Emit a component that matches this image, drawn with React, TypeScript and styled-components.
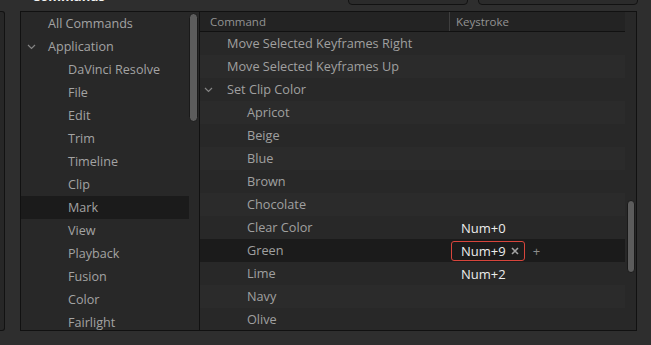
import React from 'react'
import styled, { createGlobalStyle } from 'styled-components'

const GlobalStyle = createGlobalStyle`
  body {
    margin: 0;
    background: #2e2e2e;
    font-family: "Open Sans", "Noto Sans", sans-serif;
  }
`

const tree = [
  { label: 'All Commands', depth: 0 },
  { label: 'Application', depth: 0, open: true },
  { label: 'DaVinci Resolve', depth: 1 },
  { label: 'File', depth: 1 },
  { label: 'Edit', depth: 1 },
  { label: 'Trim', depth: 1 },
  { label: 'Timeline', depth: 1 },
  { label: 'Clip', depth: 1 },
  { label: 'Mark', depth: 1, selected: true },
  { label: 'View', depth: 1 },
  { label: 'Playback', depth: 1 },
  { label: 'Fusion', depth: 1 },
  { label: 'Color', depth: 1 },
  { label: 'Fairlight', depth: 1 },
]

type Cmd = { label: string; depth: number; open?: boolean; key?: string; editing?: boolean }

const commands: Cmd[] = [
  { label: 'Move Selected Keyframes Right', depth: 0 },
  { label: 'Move Selected Keyframes Up', depth: 0 },
  { label: 'Set Clip Color', depth: 0, open: true },
  { label: 'Apricot', depth: 1 },
  { label: 'Beige', depth: 1 },
  { label: 'Blue', depth: 1 },
  { label: 'Brown', depth: 1 },
  { label: 'Chocolate', depth: 1 },
  { label: 'Clear Color', depth: 1, key: 'Num+0' },
  { label: 'Green', depth: 1, key: 'Num+9', editing: true },
  { label: 'Lime', depth: 1, key: 'Num+2' },
  { label: 'Navy', depth: 1 },
  { label: 'Olive', depth: 1 },
]

const Chevron = ({ left }: { left: number }) => (
  <ChevronWrap style={{ left }}>
    <svg width="9" height="6" viewBox="0 0 9 6">
      <path d="M1 1 L4.5 4.5 L8 1" fill="none" stroke="#858585" strokeWidth="1.2" />
    </svg>
  </ChevronWrap>
)

const App = () => {
  return (
    <Page>
      <GlobalStyle />
      <TopBar>
        <Title>Commands</Title>
        <TopButton $w={120} />
        <TopButton $w={160} />
      </TopBar>
      <Body>
        <Stub />
        <Panel>
          <TreePane>
            <TreeList>
              {tree.map((t) => (
                <TreeRow key={t.label} $depth={t.depth} $selected={!!t.selected}>
                  {t.open && <Chevron left={6} />}
                  {t.label}
                </TreeRow>
              ))}
            </TreeList>
            <Track $w={10}>
              <Thumb $top={1} $h={109} $w={9} $left={0} />
            </Track>
          </TreePane>
          <TablePane>
            <Table>
              <HeaderRow>
                <HeadCell $w={250}>Command</HeadCell>
                <HeadCell $last>Keystroke</HeadCell>
              </HeaderRow>
              {commands.map((c, i) => (
                <CmdRow key={c.label} $alt={i % 2 === 1} $selected={!!c.editing}>
                  <CmdCell $depth={c.depth}>
                    {c.open && <Chevron left={4} />}
                    {c.label}
                  </CmdCell>
                  <KeyCell>
                    {c.editing ? (
                      <>
                        <Chip>
                          {c.key}
                          <ChipClose>
                            <svg width="8" height="8" viewBox="0 0 8 8">
                              <path d="M1 1 L7 7 M7 1 L1 7" stroke="#a3a3a3" strokeWidth="1.6" />
                            </svg>
                          </ChipClose>
                        </Chip>
                        <Plus>+</Plus>
                      </>
                    ) : (
                      c.key && <KeyText>{c.key}</KeyText>
                    )}
                  </KeyCell>
                </CmdRow>
              ))}
            </Table>
            <Track $w={11}>
              <Thumb $top={188} $h={73} $w={8} $left={2} />
            </Track>
          </TablePane>
        </Panel>
      </Body>
    </Page>
  )
}

export default App

const Page = styled.div`
  width: 651px;
  height: 345px;
  overflow: hidden;
  display: flex;
  flex-direction: column;
`

const TopBar = styled.div`
  height: 11px;
  display: flex;
  align-items: flex-end;
  overflow: hidden;
`

const Title = styled.div`
  margin-left: 32px;
  margin-bottom: 7px;
  font-size: 13px;
  font-weight: 700;
  line-height: 16px;
  color: #f2f2f2;
  flex: 1;
`

const TopButton = styled.div<{ $w: number }>`
  width: ${(p) => p.$w - 2}px;
  height: 20px;
  margin-bottom: 6px;
  margin-right: 10px;
  border: 1px solid #121212;
  border-radius: 4px;
  background: #2b2b2b;
  &:last-child {
    margin-right: 13px;
  }
`

const Body = styled.div`
  height: 320px;
  display: flex;
  gap: 15px;
`

const Stub = styled.div`
  width: 4px;
  border: 1px solid #121212;
  border-left: none;
  border-radius: 0 3px 3px 0;
  background: #272727;
`

const Panel = styled.div`
  width: 615px;
  border: 1px solid #111;
  background: #282828;
  display: flex;
  overflow: hidden;
`

const TreePane = styled.div`
  width: 178px;
  display: flex;
  border-right: 1px solid #111;
`

const TreeList = styled.div`
  flex: 1;
  overflow: hidden;
`

const ChevronWrap = styled.span`
  position: absolute;
  top: 9px;
  display: flex;
`

const TreeRow = styled.div<{ $depth: number; $selected: boolean }>`
  position: relative;
  height: 23px;
  line-height: 23px;
  padding-left: ${(p) => 27 + p.$depth * 20}px;
  font-size: 12.6px;
  color: #a3a3a3;
  white-space: nowrap;
  background: ${(p) => (p.$selected ? '#1b1b1b' : 'transparent')};
`

const Track = styled.div<{ $w: number }>`
  width: ${(p) => p.$w}px;
  position: relative;
  flex-shrink: 0;
`

const Thumb = styled.div<{ $top: number; $h: number; $w: number; $left: number }>`
  position: absolute;
  top: ${(p) => p.$top}px;
  left: ${(p) => p.$left}px;
  width: ${(p) => p.$w - 2}px;
  height: ${(p) => p.$h - 2}px;
  background: #5c5c5c;
  border: 1px solid #1a1a1a;
  border-radius: 5px;
`

const TablePane = styled.div`
  flex: 1;
  display: flex;
`

const Table = styled.div`
  width: 425px;
  overflow: hidden;
`

const HeaderRow = styled.div`
  height: 19px;
  display: flex;
  background: #232323;
  border-bottom: 1px solid #111;
`

const HeadCell = styled.div<{ $w?: number; $last?: boolean }>`
  width: ${(p) => (p.$w ? `${p.$w}px` : 'auto')};
  flex: ${(p) => (p.$w ? 'none' : 1)};
  padding-left: ${(p) => (p.$last ? 6 : 10)}px;
  box-sizing: border-box;
  font-size: 11.5px;
  line-height: 19px;
  color: #939393;
  border-right: ${(p) => (p.$last ? 'none' : '1px solid #3e3e3e')};
`

const CmdRow = styled.div<{ $alt: boolean; $selected: boolean }>`
  height: 23px;
  display: flex;
  align-items: center;
  background: ${(p) => (p.$selected ? '#1b1b1b' : p.$alt ? '#2b2b2b' : '#282828')};
`

const CmdCell = styled.div<{ $depth: number }>`
  position: relative;
  width: 251px;
  box-sizing: border-box;
  padding-left: ${(p) => 27 + p.$depth * 20}px;
  font-size: 12.7px;
  line-height: 23px;
  color: #a0a0a0;
  white-space: nowrap;
`

const KeyCell = styled.div`
  flex: 1;
  display: flex;
  align-items: center;
`

const KeyText = styled.span`
  padding-left: 10px;
  font-size: 13px;
  color: #ececec;
`

const Chip = styled.div`
  height: 18px;
  display: flex;
  align-items: center;
  gap: 5px;
  padding: 0 5px 0 9px;
  border: 1px solid #d8453c;
  border-radius: 3px;
  font-size: 13px;
  color: #ececec;
`

const ChipClose = styled.span`
  display: flex;
`

const Plus = styled.span`
  margin-left: 8px;
  font-size: 13px;
  color: #8d8d8d;
`
